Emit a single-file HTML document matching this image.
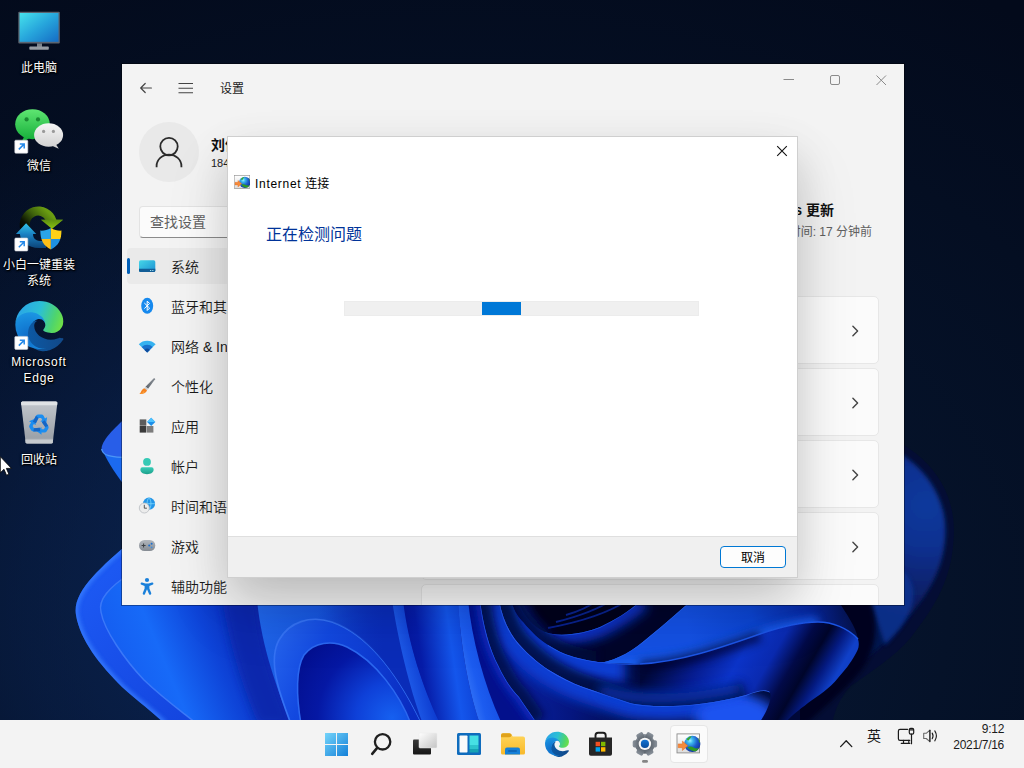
<!DOCTYPE html>
<html lang="zh-CN">
<head>
<meta charset="utf-8">
<title>设置</title>
<style>
html,body{margin:0;padding:0;}
body{width:1024px;height:768px;overflow:hidden;position:relative;background:#040d20;
 font-family:"Liberation Sans","Noto Sans CJK SC",sans-serif;font-size:12px;color:#1b1b1b;}
.abs{position:absolute;}
#wall{position:absolute;left:0;top:0;width:1024px;height:768px;}
/* desktop icons */
.dlabel{position:absolute;left:0;width:78px;text-align:center;color:#fff;font-size:12px;line-height:17px;
 text-shadow:0 1px 2px #000,0 0 3px #000,1px 1px 1px rgba(0,0,0,.9);}
/* settings window */
#win{position:absolute;left:122px;top:64px;width:782px;height:541px;background:#f3f3f3;overflow:hidden;
 box-shadow:0 0 0 1px rgba(0,0,0,.35);}
#win .t{position:absolute;white-space:nowrap;}
.nav{position:absolute;left:49px;font-weight:350;font-size:14px;line-height:20px;color:#1b1b1b;white-space:nowrap;}
.card{position:absolute;left:299px;width:458.300px;height:68.200px;background:#fbfbfb;border:1px solid #e7e7e7;border-radius:5px;box-sizing:border-box;}
/* dialog */
#dlg{position:absolute;left:228px;top:137px;width:569px;height:440px;background:#fff;
 box-shadow:0 0 0 1px #cfcfcf, 0 18px 40px rgba(0,0,0,.13), 0 32px 60px rgba(0,0,0,.13);}
#dlg .foot{position:absolute;left:0;top:399px;width:569px;height:41px;background:#f0f0f0;border-top:1px solid #dfdfdf;box-sizing:border-box;}
#dlg .btn{position:absolute;left:492px;top:409px;width:66px;height:22px;box-sizing:border-box;border:1px solid #0078d4;border-radius:4px;background:#fdfdfd;
 text-align:center;font-size:12px;line-height:22px;color:#000;}
/* taskbar */
#tb{position:absolute;left:0;top:720px;width:1024px;height:48px;background:#f3f3f3;}
#tb .t{position:absolute;white-space:nowrap;color:#1b1b1b;}
</style>
</head>
<body>
<svg id="wall" viewBox="0 0 1024 768" width="1024" height="768">
<defs>
 <radialGradient id="bg1" cx="0.45" cy="0.8" r="0.95">
  <stop offset="0" stop-color="#081b3e"/><stop offset="0.5" stop-color="#051229"/><stop offset="1" stop-color="#030a1b"/>
 </radialGradient>
 <filter id="b1" filterUnits="userSpaceOnUse" x="0" y="380" width="1024" height="388"><feGaussianBlur stdDeviation="0.7"/></filter>
 <filter id="b2" filterUnits="userSpaceOnUse" x="0" y="380" width="1024" height="388"><feGaussianBlur stdDeviation="2"/></filter>
 <filter id="b4" filterUnits="userSpaceOnUse" x="0" y="380" width="1024" height="388"><feGaussianBlur stdDeviation="4"/></filter>
 <filter id="b6" filterUnits="userSpaceOnUse" x="0" y="380" width="1024" height="388"><feGaussianBlur stdDeviation="6"/></filter>
 <filter id="b10" filterUnits="userSpaceOnUse" x="0" y="380" width="1024" height="388"><feGaussianBlur stdDeviation="10"/></filter>
 <linearGradient id="gL2" x1="76" y1="600" x2="180" y2="720" gradientUnits="userSpaceOnUse">
  <stop offset="0" stop-color="#1c58f2"/><stop offset="1" stop-color="#1446e0"/>
 </linearGradient>
 <linearGradient id="gL3" x1="100" y1="700" x2="290" y2="620" gradientUnits="userSpaceOnUse">
  <stop offset="0" stop-color="#2a6cf6"/><stop offset="0.08" stop-color="#145aee"/><stop offset="0.36" stop-color="#176af8"/>
  <stop offset="0.6" stop-color="#0e44d8"/><stop offset="0.82" stop-color="#092ab6"/><stop offset="1" stop-color="#0826ac"/>
 </linearGradient>
 <linearGradient id="gL5" x1="257" y1="610" x2="390" y2="640" gradientUnits="userSpaceOnUse">
  <stop offset="0" stop-color="#2066ea"/><stop offset="0.5" stop-color="#1654de"/><stop offset="1" stop-color="#0a2cb8"/>
 </linearGradient>
 <linearGradient id="gA1" x1="275" y1="640" x2="420" y2="700" gradientUnits="userSpaceOnUse">
  <stop offset="0" stop-color="#2462ec"/><stop offset="0.3" stop-color="#1248e0"/><stop offset="1" stop-color="#0a2cc0"/>
 </linearGradient>
 <radialGradient id="gA2" cx="392" cy="718" r="120" gradientUnits="userSpaceOnUse">
  <stop offset="0" stop-color="#1660f0"/><stop offset="0.3" stop-color="#0e40d8"/><stop offset="0.62" stop-color="#0518a4"/><stop offset="1" stop-color="#020c88"/>
 </radialGradient>
 <radialGradient id="gR" cx="926" cy="505" r="120" gradientUnits="userSpaceOnUse">
  <stop offset="0" stop-color="#103a9c"/><stop offset="0.35" stop-color="#0d3090"/><stop offset="0.7" stop-color="#09226c"/><stop offset="1" stop-color="#061650"/>
 </radialGradient>
 <linearGradient id="gT1" x1="400" y1="660" x2="470" y2="650" gradientUnits="userSpaceOnUse">
  <stop offset="0" stop-color="#041298"/><stop offset="0.3" stop-color="#061ca8"/><stop offset="0.75" stop-color="#1456ec"/><stop offset="1" stop-color="#0e44d8"/>
 </linearGradient>
 <linearGradient id="gUp" x1="690" y1="640" x2="850" y2="610" gradientUnits="userSpaceOnUse">
  <stop offset="0" stop-color="#1450e2"/><stop offset="0.4" stop-color="#0c44d0"/><stop offset="0.75" stop-color="#08269a"/><stop offset="1" stop-color="#04124e"/>
 </linearGradient>
 <linearGradient id="gCone" x1="674" y1="625" x2="829.7" y2="715.2" gradientUnits="userSpaceOnUse">
  <stop offset="0" stop-color="#000838"/><stop offset="0.23" stop-color="#061c90"/><stop offset="0.41" stop-color="#0c34c8"/><stop offset="0.56" stop-color="#0a2ab0"/><stop offset="0.68" stop-color="#020a48"/><stop offset="0.76" stop-color="#00052a"/><stop offset="0.84" stop-color="#041a80"/><stop offset="0.92" stop-color="#1040c8"/><stop offset="1" stop-color="#1040c8"/>
 </linearGradient>
 <linearGradient id="gS1" x1="392" y1="640" x2="416" y2="634" gradientUnits="userSpaceOnUse">
  <stop offset="0" stop-color="#2262ee"/><stop offset="1" stop-color="#0d3cd0"/>
 </linearGradient>
 <linearGradient id="gS2" x1="458" y1="640" x2="480" y2="634" gradientUnits="userSpaceOnUse">
  <stop offset="0" stop-color="#2a6af4"/><stop offset="0.3" stop-color="#1c5cf0"/><stop offset="1" stop-color="#1650e4"/>
 </linearGradient>
 <linearGradient id="gDk" x1="490" y1="0" x2="650" y2="0" gradientUnits="userSpaceOnUse">
  <stop offset="0" stop-color="#0a26b0"/><stop offset="0.5" stop-color="#051680"/><stop offset="1" stop-color="#000838"/>
 </linearGradient>
 <linearGradient id="gS0" x1="318" y1="0" x2="385" y2="0" gradientUnits="userSpaceOnUse">
  <stop offset="0" stop-color="#0a2ebc" stop-opacity="0"/><stop offset="1" stop-color="#0a2cb8" stop-opacity="1"/>
 </linearGradient>
 <radialGradient id="bg2" cx="280" cy="600" r="520" gradientUnits="userSpaceOnUse">
  <stop offset="0" stop-color="#0c2a5c" stop-opacity="0.8"/><stop offset="0.5" stop-color="#0a2250" stop-opacity="0.5"/><stop offset="1" stop-color="#081a40" stop-opacity="0"/>
 </radialGradient>
 <clipPath id="cL2"><path d="M132 540 C100 568 72 592 76 615 C80 640 100 665 122 687 C140 703 155 714 165 724 L420 724 L420 540Z"/></clipPath>
 <clipPath id="cRp"><path d="M860 428 C925 443 958 488 953.500 540 C951 585 930 612 912 636 C894 658 870 672 851 686 C840 697 835 710 832 724 L700 724 L700 428Z"/></clipPath>
 <clipPath id="cw"><rect x="0" y="0" width="1024" height="722"/></clipPath>
 <clipPath id="cB1"><path d="M518 600 C522 614 532 626 545 632 C560 638 585 633 600 627 C615 620 628 612 642 600 L700 600 L700 722 L460 722 L460 600Z"/></clipPath>
 <clipPath id="cB2"><path d="M511 600 C514 612 519 618 523 622 C531 632 540 640 548 645 C556 650 564 654 571 656 C586 661 605 664 640 664 C680 662 720 648 760 634 L800 640 L800 722 L460 722 L460 600Z"/></clipPath>
 <clipPath id="cB3"><path d="M499 600 C503 622 512 638 523 648.5 C532 658 540 664 548 669.5 C560 677 572 683 583 687 C600 693 615 698 630 703 C650 708 700 708 746 695 C758 690 766 689 770 692 C772 698 769 708 760 722 L460 722 L460 600Z"/></clipPath>
 <clipPath id="cB4"><path d="M480 600 C483 625 490 650 498 665 C505 680 512 690 519 697 C525 706 530 713 536 722 L460 722 L460 600Z"/></clipPath>
 <clipPath id="cUp"><path d="M600 663 C618 660 634 650 650 636 C665 624 678 612 692 600 L838 600 C846 614 856 626 858 639 C848 628 832 622 818 622 C800 622 780 627 760 634 C720 648 680 662 640 664Z"/></clipPath>
</defs>
<rect width="1024" height="768" fill="url(#bg1)"/>
<rect width="1024" height="768" fill="url(#bg2)"/>
<g clip-path="url(#cw)">
 <!-- right petal with dark outline -->
 <path d="M860 428 C925 443 958 488 953.500 540 C951 585 930 612 912 636 C894 658 870 672 851 686 C840 697 835 710 832 724 L700 724 L700 428Z" fill="#040d34"/>
 <g clip-path="url(#cRp)">
  <path d="M860 436 C918 451 950 494 945 540 C942 575 924 598 908 618 C892 640 872 653 855 666 L800 724 L700 724 L700 436Z" fill="url(#gR)" filter="url(#b2)"/>
  <path d="M880 560 C905 566 916 582 913 600 C911 615 900 630 885 645 L870 600Z" fill="#103494" filter="url(#b2)" opacity="0.8"/>
 </g>
 <path d="M836 600 L870 600 C879 625 877 650 860 672 C845 690 825 706 806 724 L770 724 L770 600Z" fill="#00031a" filter="url(#b2)" opacity="0.92"/>
 <!-- generic bloom body under the window -->
 <path d="M165 722 L130 560 L130 420 L820 420 L820 640 L785 722Z" fill="#0a28b4"/>
 <!-- upper-left small petal -->
 <path d="M130 456 L103 451 C108 463 118 478 130 492Z" fill="#1b6af0"/>
 <path d="M130 414 C114 428 100 442 101.700 450 C103 455.500 110 457.600 130 457.600Z" fill="#285ee8"/>
 <path d="M101.700 449 C102.500 455.500 110 457.600 130 457.600" fill="none" stroke="#4c96f6" stroke-width="1.300" filter="url(#b1)"/>
 <!-- lower-left outer petal -->
 <path d="M132 540 C100 568 72 592 76 615 C80 640 100 665 122 687 C140 703 155 714 165 724 L420 724 L420 540Z" fill="url(#gL2)"/>
 <path d="M132 540 C100 568 72 592 76 615 C80 640 100 665 122 687 C140 703 155 714 165 724" fill="none" stroke="#3a80ff" stroke-width="5" filter="url(#b2)" opacity="0.9" clip-path="url(#cL2)"/>
 <!-- inner petal -->
 <path d="M132 572 C108 588 98 600 101 612 C104 630 125 660 144 680 C165 700 185 714 197 724 L420 724 L420 572Z" fill="url(#gL3)"/>
 <path d="M222 600 L258 600 C262 650 278 690 292 724 L258 724 C244 690 230 650 222 600Z" fill="#0826aa" filter="url(#b4)" opacity="0.85"/>
 <!-- lighter petal right of fold -->
 <path d="M257 600 C262 650 278 690 291 724 L460 724 L460 600Z" fill="url(#gL5)"/>
 <!-- arch 1 -->
 <path d="M291 724 C278 690 268 660 279 640 C289 622 310 615 332 622 C372 636 402 682 422 724Z" fill="url(#gA1)"/>
 <!-- arch 2 -->
 <path d="M301 724 C296 695 296 668 304 655 C314 642 332 640 347 647 C376 661 400 695 411 724Z" fill="url(#gA2)"/>
 <path d="M291 724 C278 690 268 660 279 640 C289 622 310 615 332 622 C372 636 402 682 422 724" fill="none" stroke="#3472f4" stroke-width="1.600" filter="url(#b1)"/>
 <path d="M301 724 C296 695 296 668 304 655 C314 642 332 640 347 647 C376 661 400 695 411 724" fill="none" stroke="#2c68f0" stroke-width="1.500" filter="url(#b1)"/>
 <path d="M132 572 C108 588 98 600 101 612 C104 630 125 660 144 680 C165 700 185 714 197 724" fill="none" stroke="#3a78f8" stroke-width="1.500" filter="url(#b1)"/>
 <!-- swoosh zone base -->
 <path d="M467 600 L700 600 L700 724 L501 724 C484 685 472 640 467 600Z" fill="#020c5a"/>
 <!-- top dark w/ streaks -->
 <path d="M500 600 L700 600 L700 660 L500 660Z" fill="#00031c"/>
 <g stroke="#0a2aa8" stroke-width="2" fill="none" filter="url(#b1)" opacity="0.8">
  <path d="M548 628 C580 622 610 612 628 600"/><path d="M556 622 C580 616 600 608 612 600"/><path d="M566 615 C580 611 590 606 598 600"/>
 </g>
 <!-- band1 -->
 <g clip-path="url(#cB1)">
  <rect x="460" y="600" width="250" height="124" fill="#00052a"/>
  <path d="M518 600 C522 614 532 626 545 632 C560 638 585 633 600 627 C615 620 628 612 642 600" fill="none" stroke="#0c32c4" stroke-width="20" filter="url(#b6)"/>
  <path d="M545 632 C560 638 585 633 600 627 C615 620 628 612 642 600" fill="none" stroke="#1c54e4" stroke-width="1.400" filter="url(#b1)"/>
 </g>
 <path d="M470 600 L524 600 C530 618 538 628 548 634 L530 660 L470 640Z" fill="#0a2cb4" filter="url(#b6)" opacity="0.9"/>
 <!-- upper bright petal (between E1b and E2) -->
 <g clip-path="url(#cUp)">
  <rect x="590" y="600" width="280" height="70" fill="url(#gUp)"/>
  <path d="M600 666 C640 667 680 664 720 650 C750 640 790 625 818 624" fill="none" stroke="#1a62f0" stroke-width="14" filter="url(#b4)" opacity="0.8"/>
  <path d="M600 663 C618 660 634 650 650 636 C665 624 678 612 692 600" fill="none" stroke="#2460ee" stroke-width="1.6" filter="url(#b1)"/>
 </g>
 <path d="M511 600 C514 612 519 618 523 622 C531 632 540 640 548 645 C556 650 564 654 571 656 C580 659 588 661 596 662" fill="none" stroke="#01083c" stroke-width="22" filter="url(#b4)" opacity="0.8"/>
 <!-- band2 -->
 <g clip-path="url(#cB2)">
  <path d="M460 600 L600 600 L600 663 C640 664 680 662 720 648 C740 641 750 637 760 634 L800 640 L800 724 L460 724Z" fill="url(#gDk)"/>
  <path d="M511 600 C514 612 519 618 523 622 C531 632 540 640 548 645 C556 650 564 654 571 656 C586 661 605 664 625 664" fill="none" stroke="#0e3cd2" stroke-width="38" filter="url(#b6)"/>
  <path d="M548 645 C556 650 564 654 571 656 C586 661 605 664 640 664 C680 662 720 648 760 634" fill="none" stroke="#2058ea" stroke-width="1.500" filter="url(#b1)"/>
 </g>
 <!-- cone interior right -->
 <path d="M640 664 C680 662 720 648 760 634 C780 627 800 622 818 622 C832 622 848 628 858 639 C860 646 858 650 855 655 C850 664 845 670 838 678 C830 688 818 696 808 703 C798 711 790 716 785 724 L640 724Z" fill="url(#gCone)"/>
 <path d="M640 666 C680 664 720 650 760 636" fill="none" stroke="#00052a" stroke-width="10" filter="url(#b4)" opacity="0.7"/>
 <path d="M640 664 C680 662 720 648 760 634 C780 627 800 622 818 622 C832 622 848 628 858 639" fill="none" stroke="#1c54e4" stroke-width="1.4" filter="url(#b1)"/>
 <path d="M499 600 C503 622 512 638 523 648.5 C532 658 540 664 548 669.5 C560 677 572 683 583 687 C600 693 615 698 630 703 C650 708 700 708 746 695" fill="none" stroke="#01083c" stroke-width="26" filter="url(#b4)" opacity="0.85"/>
 <!-- band3 -->
 <g clip-path="url(#cB3)">
  <rect x="460" y="600" width="330" height="130" fill="url(#gDk)"/>
  <path d="M499 600 C503 622 512 638 523 648.5 C532 658 540 664 548 669.5 C560 677 572 683 583 687 C600 693 615 698 630 703 C650 708 700 708 746 695" fill="none" stroke="#0e3cd2" stroke-width="30" filter="url(#b6)"/>
  <ellipse cx="735" cy="716" rx="40" ry="22" fill="#1a52f0" filter="url(#b6)"/>
  <path d="M499 600 C503 622 512 638 523 648.5 C532 658 540 664 548 669.5 C560 677 572 683 583 687 C600 693 615 698 630 703 C650 708 700 708 746 695 C758 690 766 689 770 692" fill="none" stroke="#2a5eee" stroke-width="1.500" filter="url(#b1)"/>
 </g>
 <!-- glow above E3 -->
 <path d="M600 690 C630 700 680 702 740 688" fill="none" stroke="#0e3cd0" stroke-width="10" filter="url(#b6)" opacity="0.85"/>
 <path d="M480 600 C483 625 490 650 498 665 C505 680 512 690 519 697 C525 706 530 713 536 722" fill="none" stroke="#01083c" stroke-width="22" filter="url(#b4)" opacity="0.8"/>
 <!-- band4 -->
 <g clip-path="url(#cB4)">
  <rect x="460" y="600" width="90" height="130" fill="#03108c"/>
  <path d="M480 600 C483 625 490 650 498 665 C505 680 512 690 519 697 C525 706 530 713 536 722" fill="none" stroke="#0a2cc0" stroke-width="10" filter="url(#b4)"/>
  <path d="M480 600 C483 625 490 650 498 665 C505 680 512 690 519 697 C525 706 530 713 536 722" fill="none" stroke="#2054e6" stroke-width="1.300" filter="url(#b1)"/>
 </g>
 <!-- stripes and tube -->
 <path d="M300 600 L392 600 C398 640 410 690 424 724 L422 724 C402 682 372 636 332 622 C320 618 310 618 300 620Z" fill="url(#gS0)"/>
 <path d="M392 600 L404 600 C408 645 424 690 441 724 L423 724 C410 690 398 640 392 600Z" fill="url(#gS1)"/>
 <path d="M403 600 L458 600 C460 640 468 690 480 724 L440 724 C424 690 408 645 403 600Z" fill="url(#gT1)"/>
 <path d="M458 600 L468 600 C472 640 484 685 502 724 L480 724 C468 690 460 640 458 600Z" fill="url(#gS2)"/>
</g>
</svg>

<svg class="abs" style="left:0;top:0" width="80" height="480" viewBox="0 0 80 480">
 <defs>
  <linearGradient id="scr" x1="0" y1="0" x2="1" y2="1"><stop offset="0" stop-color="#46e2ec"/><stop offset="0.5" stop-color="#27a6dc"/><stop offset="1" stop-color="#156cc4"/></linearGradient>
  <linearGradient id="wcg" x1="0" y1="0" x2="0" y2="1"><stop offset="0" stop-color="#5fe672"/><stop offset="1" stop-color="#18b03c"/></linearGradient>
  <linearGradient id="wcw" x1="0" y1="0" x2="0" y2="1"><stop offset="0" stop-color="#f6f6f6"/><stop offset="1" stop-color="#d2d2d2"/></linearGradient>
  <linearGradient id="bin" x1="0" y1="0" x2="0" y2="1"><stop offset="0" stop-color="#c9cdd2"/><stop offset="0.85" stop-color="#a3a8ae"/><stop offset="1" stop-color="#b9bdc2"/></linearGradient>
  <linearGradient id="xbg" x1="20" y1="232" x2="44" y2="208" gradientUnits="userSpaceOnUse"><stop offset="0" stop-color="#000"/><stop offset="0.3" stop-color="#0c1402"/><stop offset="0.65" stop-color="#3e620c"/><stop offset="1" stop-color="#6a9c12"/></linearGradient>
  <linearGradient id="xbh" x1="0" y1="0" x2="0" y2="1"><stop offset="0" stop-color="#5c8e10"/><stop offset="1" stop-color="#8cc412"/></linearGradient>
  <linearGradient id="xbb" x1="0" y1="0" x2="0" y2="1"><stop offset="0" stop-color="#32c6e6"/><stop offset="0.45" stop-color="#1a80c2"/><stop offset="1" stop-color="#0c4478"/></linearGradient>
  <g id="sc"><rect x="0" y="0" width="13" height="13" rx="1" fill="#fff" stroke="#d0d4da" stroke-width="0.6"/><path d="M4 9.2L9 4.2M5 3.8h4.4v4.4" fill="none" stroke="#2488e8" stroke-width="1.500"/></g>
  <linearGradient id="eg1" x1="63" y1="177" x2="241" y2="177" gradientUnits="userSpaceOnUse"><stop offset="0" stop-color="#0c59a4"/><stop offset="1" stop-color="#114a8b"/></linearGradient>
  <radialGradient id="eg2" cx="70" cy="190" r="150" gradientUnits="userSpaceOnUse"><stop offset="0" stop-color="#0f6cc8"/><stop offset="0.5" stop-color="#1583d8"/><stop offset="1" stop-color="#1e9de6"/></radialGradient>
  <linearGradient id="eg3" x1="20" y1="40" x2="250" y2="120" gradientUnits="userSpaceOnUse"><stop offset="0" stop-color="#2aa6e6"/><stop offset="0.45" stop-color="#2cc0d4"/><stop offset="0.8" stop-color="#4ed46e"/><stop offset="1" stop-color="#6ee048"/></linearGradient>
  <g id="edge">
   <path d="M235.700 195.500a93.700 93.700 0 0 1-10.600 4.700 101.900 101.900 0 0 1-35.900 6.400c-47.300 0-88.500-32.500-88.500-74.300a31.500 31.500 0 0 1 16.400-27.300c-42.800-1.800-53.800 46.400-53.800 74.600 0 79.900 73.600 87.900 89.500 87.900 8.600 0 21.500-2.500 29.300-5l1.400-0.400a139.400 139.400 0 0 0 72.300-57.300 4.300 4.300 0 0 0-5.800-6.100z" fill="url(#eg1)"/>
   <path d="M105.700 241.400a79.200 79.200 0 0 1-22.700-21.300 80.700 80.700 0 0 1 29.500-120c3.200-1.500 8.500-4.100 15.600-4a32.400 32.400 0 0 1 25.700 13 31.900 31.900 0 0 1 6.300 18.700c0-0.200 24.500-79.600-80-79.600-43.900 0-80 41.600-80 78.200a130.200 130.200 0 0 0 12.100 56 128 128 0 0 0 156.400 67 75.500 75.500 0 0 1-62.800-8z" fill="url(#eg2)"/>
   <path d="M152.300 148.900c-0.900 1-3.400 2.500-3.400 5.600 0 2.600 1.700 5.200 4.800 7.300 14.300 10 41.400 8.600 41.500 8.600a59.600 59.600 0 0 0 30.300-8.300 61.400 61.400 0 0 0 30.400-52.900c0.300-22.400-8-37.300-11.300-43.900C223.500 24.100 178.200 0 128 0A128 128 0 0 0 0 126.200c0.500-36.500 36.800-66 80-66 3.500 0 23.500 0.300 42 10a72.600 72.600 0 0 1 30.900 29.300c6.100 10.600 7.200 24.100 7.200 29.500s-2.700 13.300-7.900 20z" fill="url(#eg3)"/>
  </g>
 </defs>
 <!-- This PC -->
 <rect x="18.3" y="11.7" width="41.5" height="31.7" rx="1" fill="#5b6470"/>
 <rect x="19.6" y="13" width="38.9" height="28.8" fill="url(#scr)"/>
 <rect x="37" y="43.4" width="5" height="4" fill="#7b828a"/>
 <rect x="29.3" y="46.6" width="19.5" height="3.2" rx="0.8" fill="#969ca3"/>
 <!-- WeChat -->
 <path d="M24.2 136.2l-2.8 6.3 7.6-4z" fill="#18b03c"/>
 <ellipse cx="32.5" cy="124.2" rx="17.3" ry="15" fill="url(#wcg)"/>
 <circle cx="26.6" cy="119.4" r="2.1" fill="#1a8a32"/><circle cx="38" cy="119.4" r="2.1" fill="#1a8a32"/>
 <path d="M55.4 143.6l3.4 5.2-7.4-3.4z" fill="#d2d2d2"/>
 <ellipse cx="48.6" cy="135" rx="14.5" ry="11.8" fill="url(#wcw)"/>
 <circle cx="43.6" cy="131.4" r="1.6" fill="#9a9a9a"/><circle cx="53.4" cy="131.4" r="1.6" fill="#9a9a9a"/>
 <use href="#sc" x="14.8" y="140.2"/>
 <!-- XiaoBai reinstall -->
 <path d="M20.500 230.900A18.800 18.800 0 0 1 56.400 219.700L63 219.700L52 228.800L41 219.700L45.400 219.700A8.400 8.400 0 0 0 30.300 226.900Z" fill="url(#xbg)"/>
 <path d="M41 219.700H63L52 228.800Z" fill="url(#xbh)"/>
 <path d="M26.100 223.300L36.300 233.900H33C33 237.500 35 240.500 40 241H46V248H39C28 247.500 20.500 242 19.900 233.900H15.900Z" fill="url(#xbb)"/>
 <clipPath id="shc"><path d="M50.900 228C47.500 230 44 230.800 40.300 230.600C40.300 240 43.500 246 50.900 249.600C58.300 246 61.500 240 61.500 230.600C57.800 230.800 54.300 230 50.900 228Z"/></clipPath>
 <g clip-path="url(#shc)">
  <rect x="40" y="227" width="10.900" height="12" fill="#2aa4e8"/><rect x="50.900" y="227" width="11" height="12" fill="#fdd116"/>
  <rect x="40" y="239" width="10.900" height="11" fill="#fcbe18"/><rect x="50.900" y="239" width="11" height="11" fill="#1e90e0"/>
 </g>
 <use href="#sc" x="14.800" y="238"/>
 <!-- Edge -->
 <use href="#edge" transform="translate(15.300 301) scale(0.1875)"/>
 <use href="#sc" x="14.800" y="336.400"/>
 <!-- Recycle bin -->
 <path d="M21 402.600l1.200-1h34l1.200 1-4.600 39.600q-0.200 1.400-1.600 1.400H27.200q-1.400 0-1.600-1.400z" fill="url(#bin)" opacity="0.96"/>
 <path d="M21 402.600l1.200-1h34l1.200 1-0.300 2.600H21.300z" fill="#dfe2e5"/>
 <path d="M25.300 439.600h27.800l-0.300 2.600q-0.200 1.400-1.600 1.400H27.200q-1.400 0-1.600-1.400z" fill="#c6cace"/>
 <g transform="translate(39.200 424.400)">
  <g fill="#1b8df0"><path d="M-6.400 -2.600L-3.200 -8.600Q-2.400 -10 -0.800 -10L2.200 -10Q3.600 -10 4.400 -8.600L5.800 -6L7.900 -7.200L7 -0.900L1.100 -3.200L3.100 -4.400L1.900 -6.500L-0.700 -6.500L-3.300 -1.200Z"/></g>
  <g fill="#1b8df0" transform="rotate(120)"><path d="M-6.400 -2.600L-3.200 -8.600Q-2.400 -10 -0.800 -10L2.200 -10Q3.600 -10 4.400 -8.600L5.800 -6L7.900 -7.200L7 -0.900L1.100 -3.200L3.100 -4.400L1.900 -6.500L-0.700 -6.500L-3.300 -1.200Z"/></g>
  <g fill="#1b8df0" transform="rotate(240)"><path d="M-6.400 -2.600L-3.200 -8.600Q-2.400 -10 -0.800 -10L2.200 -10Q3.600 -10 4.400 -8.600L5.800 -6L7.900 -7.200L7 -0.900L1.100 -3.200L3.100 -4.400L1.900 -6.500L-0.700 -6.500L-3.300 -1.200Z"/></g>
  <g fill="#1565c4"><path d="M-6.400 -2.600L-3.200 -8.600L-0.700 -6.500L-3.300 -1.200Z"/><path d="M-6.400 -2.600L-3.200 -8.600L-0.700 -6.500L-3.300 -1.200Z" transform="rotate(120)"/><path d="M-6.400 -2.600L-3.200 -8.600L-0.700 -6.500L-3.300 -1.200Z" transform="rotate(240)"/></g>
 </g>
 <!-- cursor -->
 <path d="M0.300 456.600v16.200l3.700-3.500 2.500 5.900 2.400-1-2.500-5.800h5.100z" fill="#fff" stroke="#000" stroke-width="0.8" stroke-linejoin="round"/>
</svg>
<div class="dlabel" style="top:59.500px">此电脑</div>
<div class="dlabel" style="top:157.500px">微信</div>
<div class="dlabel" style="top:257px;line-height:16px">小白一键重装<br>系统</div>
<div class="dlabel" style="top:353.500px;line-height:16px;letter-spacing:0.750px">Microsoft<br>Edge</div>
<div class="dlabel" style="top:451.500px">回收站</div>

<div id="win">
 <!-- title row -->
 <svg class="abs" style="left:17px;top:18px" width="14" height="12" viewBox="0 0 14 12"><path d="M12.4 6H1.8M6.2 1.5L1.7 6l4.5 4.5" fill="none" stroke="#444" stroke-width="1.2" stroke-linecap="round" stroke-linejoin="round"/></svg>
 <svg class="abs" style="left:56px;top:18px" width="16" height="12" viewBox="0 0 16 12"><path d="M0.5 1.5h14.5M0.5 6.2h14.5M0.5 10.7h14.5" stroke="#444" stroke-width="1.1" fill="none"/></svg>
 <div class="t" style="left:98px;top:17px;font-size:12px;line-height:17px;color:#1b1b1b">设置</div>
 <svg class="abs" style="left:660px;top:9px" width="106" height="14" viewBox="0 0 106 14">
  <path d="M1.5 6.5h10.5" stroke="#8a8a8a" stroke-width="1" fill="none"/>
  <rect x="48.5" y="2.5" width="9" height="9" rx="1.5" fill="none" stroke="#8a8a8a" stroke-width="1"/>
  <path d="M94.5 2.5l9.5 9.5M104 2.5l-9.5 9.5" stroke="#8a8a8a" stroke-width="1" fill="none"/>
 </svg>
 <!-- avatar -->
 <div class="abs" style="left:17px;top:58px;width:60px;height:60px;border-radius:50%;background:#e9e9e9"></div>
 <svg class="abs" style="left:27px;top:68px" width="40" height="40" viewBox="0 0 40 40">
  <circle cx="20" cy="14.6" r="8.7" fill="none" stroke="#2b2b2b" stroke-width="1.8"/>
  <path d="M7.6 35.2v-1.2c0-6.6 5.6-11.4 12.4-11.4s12.4 4.8 12.4 11.4v1.2" fill="none" stroke="#2b2b2b" stroke-width="1.8"/>
 </svg>
 <div class="t" style="left:89px;top:71px;font-size:14px;line-height:20px;font-weight:bold;color:#111">刘伟</div>
 <div class="t" style="left:89px;top:92px;font-size:11px;line-height:15px;color:#222">184****@outlook.com</div>
 <!-- search -->
 <div class="abs" style="left:17px;top:142px;width:286px;height:32px;box-sizing:border-box;background:#fbfbfb;border:1px solid #e3e3e3;border-bottom:1px solid #8b8b8b;border-radius:4px"></div>
 <div class="t" style="left:28px;top:148px;font-size:14px;line-height:20px;color:#606060">查找设置</div>
 <!-- nav -->
 <div class="abs" style="left:5px;top:184px;width:298px;height:36px;border-radius:4px;background:#eaeaea"></div>
 <div class="abs" style="left:5px;top:194px;width:3px;height:16px;border-radius:2px;background:#005fb8"></div>
 <svg class="abs" style="left:15px;top:190px" width="20" height="350" viewBox="0 0 20 350">
  <defs>
   <linearGradient id="n1" x1="0" y1="0" x2="1" y2="1"><stop offset="0" stop-color="#45d6e8"/><stop offset="1" stop-color="#1b8fd2"/></linearGradient>
   <linearGradient id="n6" x1="0" y1="0" x2="0" y2="1"><stop offset="0" stop-color="#38cdb8"/><stop offset="1" stop-color="#1c9f8a"/></linearGradient>
   <linearGradient id="n8" x1="0" y1="0" x2="0" y2="1"><stop offset="0" stop-color="#b2b7bd"/><stop offset="1" stop-color="#858b93"/></linearGradient>
   <linearGradient id="n4" x1="1" y1="0" x2="0" y2="1"><stop offset="0" stop-color="#8a9097"/><stop offset="1" stop-color="#5d636a"/></linearGradient>
  </defs>
  <!-- system -->
  <rect x="2" y="6.300" width="16.300" height="11.800" rx="1.600" fill="url(#n1)"/>
  <path d="M2 14.800h16.300v1.700q0 1.600-1.600 1.600H3.600q-1.600 0-1.600-1.600z" fill="#125d96"/>
  <rect x="13" y="16" width="1.200" height="1" fill="#9fe0f2"/><rect x="15.200" y="16" width="1.200" height="1" fill="#9fe0f2"/>
  <!-- bluetooth -->
  <ellipse cx="10.200" cy="51.800" rx="6" ry="8" fill="#1689ee"/>
  <path d="M7.600 49.300l5 4.800-2.400 2.400v-9.400l2.400 2.400-5 4.800" fill="none" stroke="#fff" stroke-width="1" stroke-linejoin="round" stroke-linecap="round"/>
  <!-- wifi -->
  <path d="M10.200 98.600L1.800 90.200a11.900 11.900 0 0 1 16.800 0z" fill="#36b2f0"/>
  <path d="M10.200 98.600L4.700 93.100a7.800 7.800 0 0 1 11 0z" fill="#1a72cc"/>
  <path d="M10.200 98.600L7.500 95.900a3.800 3.800 0 0 1 5.400 0z" fill="#0f4c9c"/>
  <!-- brush -->
  <path d="M16.800 124.300q1.400-0.600 1.300 0.900l-7 9.600-2.600-2z" fill="url(#n4)"/>
  <path d="M8.500 132.800l2.600 2-1.100 1.500-2.700-2.100z" fill="#c9ced3"/>
  <path d="M7.300 134.200l2.700 2.100c-0.600 2.400-3.400 3.900-7.600 3.600 1.800-1.100 1.800-4.700 4.900-5.700z" fill="#f58220"/>
  <path d="M2.400 139.900c2.200-0.300 3.400-1.300 4.200-2.900l1.400 1.100c-1 1.300-2.900 2-5.600 1.800z" fill="#f9a03c"/>
  <!-- apps -->
  <rect x="2.700" y="165.400" width="6.600" height="6.300" fill="#5c5c5c"/>
  <rect x="2.700" y="172" width="6.600" height="6.600" fill="#3a3a3a"/>
  <rect x="9.800" y="172" width="6.600" height="6.600" fill="#7c7c7c"/>
  <path d="M14.200 163.800l4.100 4.100-4.100 4.100-4.100-4.100z" fill="#1d8fe8"/>
  <path d="M14.200 163.800l4.100 4.100h-8.200z" fill="#4cc2ff"/>
  <!-- account -->
  <circle cx="10" cy="207.900" r="3.900" fill="#35c9b5"/>
  <path d="M3.400 215.200q0-2 2-2h9.200q2 0 2 2v0.600c0 2.600-2.800 4.400-6.600 4.400s-6.600-1.800-6.600-4.400z" fill="url(#n6)"/>
  <!-- time & language -->
  <circle cx="12" cy="249.700" r="6.100" fill="#2496e8"/>
  <path d="M12 243.600c-2.600 2.600-2.600 9.600 0 12.200c2.600-2.600 2.600-9.600 0-12.200zM6 249.700h12" fill="none" stroke="#7fd6fa" stroke-width="0.800"/>
  <circle cx="7.300" cy="254" r="5" fill="#ececec" stroke="#b9bdc2" stroke-width="0.800"/>
  <path d="M7.300 251.200v3h2.200" fill="none" stroke="#444" stroke-width="0.900" stroke-linecap="round" stroke-linejoin="round"/>
  <!-- gaming -->
  <rect x="2" y="286" width="16.300" height="11" rx="5.500" fill="url(#n8)"/>
  <path d="M6.600 289.500v4M4.600 291.500h4" stroke="#3c3f44" stroke-width="1"/>
  <circle cx="12.200" cy="291.500" r="1" fill="#1b6fd0"/><circle cx="14.600" cy="289.700" r="1" fill="#1b6fd0"/><circle cx="14.600" cy="293.300" r="0.900" fill="#3c8ee0"/>
  <!-- accessibility -->
  <circle cx="10" cy="326" r="2.100" fill="#1a80da"/>
  <path d="M3.600 329.400q0.300-1.200 1.500-0.800l3.300 1h3.200l3.300-1q1.200-0.400 1.500 0.800q0.200 1-0.900 1.400l-3.100 1.100v2.500l1.800 4.700q0.400 1.200-0.700 1.600q-1 0.300-1.500-0.800L10 335.300l-2 4.600q-0.500 1.100-1.500 0.800q-1.100-0.400-0.700-1.600l1.800-4.700v-2.500l-3.100-1.100q-1.100-0.400-0.900-1.400z" fill="#1a80da"/>
 </svg>
 <div class="nav" style="top:193px">系统</div>
 <div class="nav" style="top:233px">蓝牙和其他设备</div>
 <div class="nav" style="top:273px">网络 &amp; Internet</div>
 <div class="nav" style="top:313px">个性化</div>
 <div class="nav" style="top:353px">应用</div>
 <div class="nav" style="top:393px">帐户</div>
 <div class="nav" style="top:433px">时间和语言</div>
 <div class="nav" style="top:473px">游戏</div>
 <div class="nav" style="top:513px">辅助功能</div>
 <!-- right column -->
 <div class="t" style="right:70px;top:136px;font-size:14px;line-height:20px;font-weight:bold;color:#111">Windows 更新</div>
 <div class="t" style="right:32px;top:159.500px;font-size:12px;line-height:17px;color:#606060">上次检查时间: 17 分钟前</div>
 <div class="card" style="top:232.3px"></div>
 <div class="card" style="top:304.3px"></div>
 <div class="card" style="top:376.3px"></div>
 <div class="card" style="top:448.3px"></div>
 <div class="card" style="top:520.3px"></div>
 <svg class="abs" style="left:728px;top:260px" width="10" height="230" viewBox="0 0 10 230">
  <g fill="none" stroke="#444" stroke-width="1.4" stroke-linecap="round" stroke-linejoin="round">
   <path d="M2.9 2.2L7.6 7l-4.7 4.8"/><path d="M2.9 74.2L7.6 79l-4.7 4.8"/><path d="M2.9 146.2L7.6 151l-4.7 4.8"/><path d="M2.9 218.2L7.6 223l-4.7 4.8"/>
  </g>
 </svg>
</div>

<div id="dlg">
 <svg class="abs" style="left:548px;top:8px" width="12" height="12" viewBox="0 0 12 12"><path d="M1.2 1.2l9.6 9.6M10.8 1.2l-9.6 9.6" stroke="#111" stroke-width="1.1" fill="none"/></svg>
 <svg class="abs" style="left:6px;top:38px" width="16" height="14" viewBox="0 0 23 20"><use href="#neticon" transform="translate(0.250 0.500)"/></svg>
 <div class="abs" style="left:27px;top:38.500px;font-size:12px;line-height:17px;color:#000;white-space:nowrap"><span style="letter-spacing:0.700px">Internet </span>连接</div>
 <div class="abs" style="left:38px;top:85.500px;font-size:16px;line-height:23px;color:#003399;white-space:nowrap">正在检测问题</div>
 <div class="abs" style="left:116px;top:164px;width:355px;height:15px;background:#f0f0f0;box-sizing:border-box;border:1px solid #ececec"></div>
 <div class="abs" style="left:254px;top:165px;width:39px;height:13px;background:#0078d7"></div>
 <div class="foot"></div>
 <div class="btn">取消</div>
</div>

<div id="tb">
 <!-- active app tile -->
 <div class="abs" style="left:670px;top:4.600px;width:38px;height:38.700px;box-sizing:border-box;border-radius:4px;background:#fbfbfb;border:1px solid #e6e6e6"></div>
 <svg class="abs" style="left:320px;top:0" width="400" height="48" viewBox="320 0 400 48">
  <defs>
   <linearGradient id="wl" x1="0" y1="0" x2="1" y2="1"><stop offset="0" stop-color="#74d4fa"/><stop offset="1" stop-color="#1480d8"/></linearGradient>
   <linearGradient id="tv1" x1="0" y1="0" x2="1" y2="1"><stop offset="0" stop-color="#ffffff"/><stop offset="1" stop-color="#c4c4c4"/></linearGradient>
   <linearGradient id="tv2" x1="0" y1="0" x2="0" y2="1"><stop offset="0" stop-color="#3a3a3a"/><stop offset="1" stop-color="#161616"/></linearGradient>
   <linearGradient id="fo" x1="0" y1="0" x2="0" y2="1"><stop offset="0" stop-color="#ffd75e"/><stop offset="1" stop-color="#f8b92a"/></linearGradient>
   <linearGradient id="gear" x1="0" y1="0" x2="0" y2="1"><stop offset="0" stop-color="#8a929b"/><stop offset="1" stop-color="#5c646d"/></linearGradient>
<linearGradient id="gearc" x1="0" y1="0" x2="0" y2="1"><stop offset="0" stop-color="#1274d4"/><stop offset="1" stop-color="#0a4c9c"/></linearGradient>
   <linearGradient id="nfr" x1="0" y1="0" x2="0" y2="1"><stop offset="0" stop-color="#ffffff"/><stop offset="1" stop-color="#dcdcdc"/></linearGradient>
   <radialGradient id="nglobe" cx="0.36" cy="0.3" r="0.75"><stop offset="0" stop-color="#9af0ff"/><stop offset="0.25" stop-color="#3ab4ec"/><stop offset="0.6" stop-color="#1c5ccc"/><stop offset="1" stop-color="#12329a"/></radialGradient>
   <g id="neticon">
   <rect x="0" y="0" width="22.5" height="19" fill="url(#nfr)" stroke="#8c8c8c" stroke-width="0.9"/>
   <circle cx="15.3" cy="10" r="8.1" fill="url(#nglobe)"/>
   <path d="M9.600 5.200c1.600-1.800 3.400-2.600 5-2.800-0.600 1.600-2 2.400-2.600 3.800-0.800 0.600-1.800 0.200-2.400-1z" fill="#3aa62a"/>
   <path d="M10.400 13.400c2-1.200 4.400-0.800 6.600 0.400 1.600 1 3.600 0.800 4.800 0.200-0.600 1.600-1.800 2.800-3 3.400-3 0.200-6.200-1-8.400-4z" fill="#2f9a24"/>
   <path d="M20.600 3.800c1.400 1.400 2.400 3.200 2.600 5.200-1-0.600-1.400-1.800-1.600-3z" fill="#3aa62a"/>
   <path d="M1.200 10h4.200V7.200l5.400 4.700-5.400 4.700v-2.800H1.200z" fill="#f58a3c" stroke="#e26a1c" stroke-width="0.5" stroke-linejoin="round"/>
  </g>
  </defs>
  <!-- windows logo -->
  <rect x="325" y="13" width="23" height="23" fill="url(#wl)"/>
  <path d="M336.5 13v23M325 24.5h23" stroke="#f3f3f3" stroke-width="1"/>
  <!-- search -->
  <circle cx="382.6" cy="21.8" r="7.7" fill="none" stroke="#1f1f1f" stroke-width="2.3"/>
  <path d="M377 28.2l-4.8 5.6" stroke="#1f1f1f" stroke-width="2.6" stroke-linecap="round"/>
  <!-- task view -->
  <rect x="413" y="19.5" width="18" height="15" rx="1" fill="url(#tv2)"/>
  <rect x="419" y="13" width="18" height="15" rx="1" fill="url(#tv1)" stroke="#e9e9e9" stroke-width="0.5"/>
  <!-- widgets -->
  <rect x="457" y="13" width="24" height="22" rx="1.5" fill="#0f6cbd"/>
  <rect x="459.5" y="15.5" width="8" height="17" rx="0.8" fill="#fafafa"/>
  <rect x="469.5" y="15.5" width="9" height="9.5" fill="#46e0e4"/>
  <rect x="469.5" y="25" width="9" height="4" fill="#2cc3cc"/>
  <rect x="469.5" y="29" width="9" height="3.5" fill="#16a3b4"/>
  <!-- folder -->
  <path d="M501 15.2q0-2 2-2h6.2q1.2 0 2 1l1.6 2.2H523q2 0 2 2V33q0 1.6-1.6 1.6h-20.8q-1.6 0-1.6-1.6z" fill="url(#fo)"/>
  <path d="M501 15.2q0-2 2-2h6.2q1.2 0 2 1l0.6 0.9q-0.6 2.2-2.6 2.2H501z" fill="#e0a21a"/>
  <path d="M505 34.6v-5q0-2 2-2h11q2 0 2 2v5z" fill="#1580d8"/>
  <rect x="508" y="30.2" width="9" height="1.6" rx="0.8" fill="#0d5fae"/>
  <!-- edge placeholder --><use href="#edge" transform="translate(545 11.800) scale(0.09375)"/>
  <!-- store -->
  <path d="M595.5 18v-2.6q0-2.6 2.6-2.6h5q2.6 0 2.6 2.6V18" fill="none" stroke="#1c1c1c" stroke-width="1.9"/>
  <path d="M589 17.5h23V34q0 1.8-1.8 1.8h-19.4q-1.8 0-1.8-1.8z" fill="#262626"/>
  <rect x="595.6" y="21.8" width="4.4" height="4.4" fill="#f25022"/><rect x="601" y="21.8" width="4.4" height="4.4" fill="#7fba00"/>
  <rect x="595.6" y="27.2" width="4.4" height="4.4" fill="#00a4ef"/><rect x="601" y="27.2" width="4.4" height="4.4" fill="#ffb900"/>
  <!-- gear --><g fill="url(#gear)"><circle cx="644.9" cy="23.9" r="9.9"/><rect x="641.3" y="11.7" width="7.2" height="7" rx="1.8" transform="rotate(90 644.9 23.9)"/><rect x="641.3" y="11.7" width="7.2" height="7" rx="1.8" transform="rotate(150 644.9 23.9)"/><rect x="641.3" y="11.7" width="7.2" height="7" rx="1.8" transform="rotate(210 644.9 23.9)"/><rect x="641.3" y="11.7" width="7.2" height="7" rx="1.8" transform="rotate(270 644.9 23.9)"/><rect x="641.3" y="11.7" width="7.2" height="7" rx="1.8" transform="rotate(330 644.9 23.9)"/><rect x="641.3" y="11.7" width="7.2" height="7" rx="1.8" transform="rotate(390 644.9 23.9)"/></g>
  <circle cx="644.9" cy="23.9" r="6.2" fill="#f7f7f7"/><circle cx="644.9" cy="23.9" r="4.1" fill="url(#gearc)"/>
  <rect x="642" y="40" width="6" height="2.8" rx="1.4" fill="#858585"/>
  <!-- active icon --><use href="#neticon" transform="translate(677 13.900)"/>
 </svg>
 <!-- tray -->
 <svg class="abs" style="left:836px;top:4px" width="110" height="32" viewBox="836 4 110 32">
  <path d="M840.6 26.6l5.6-5.8 5.6 5.8" fill="none" stroke="#1b1b1b" stroke-width="1.3" stroke-linecap="round" stroke-linejoin="round"/>
  <!-- network -->
  <g fill="none" stroke="#1b1b1b" stroke-width="1.2" stroke-linecap="round">
   <path d="M907.600 9.300H900q-1.600 0-1.600 1.600v7.800q0 1.600 1.600 1.600h9.800"/><path d="M903.500 20.300v3.100M908.800 20.300v3.100M901.300 23.400h8.500"/>
   <rect x="909.300" y="8.300" width="4.400" height="5.900" rx="1.400"/><path d="M909.600 9.900h3.800M911.500 14.200v9.500"/>
  </g>
  <!-- speaker -->
  <g fill="none" stroke-linejoin="round" stroke-linecap="round">
   <path d="M923.700 13.300h2.500l3.700-3.100v11.400l-3.700-3.100h-2.500z" stroke="#6a6a6a" stroke-width="1.100"/>
   <path d="M929.900 10.200v11.400" stroke="#1b1b1b" stroke-width="1.100"/>
   <path d="M932.200 13.100q1.700 2.800 0 5.600M934.800 10.900q3.200 5 0 10" stroke="#1b1b1b" stroke-width="1.100"/>
  </g>
 </svg>
 <div class="t" style="left:867px;top:6px;font-size:14px;line-height:20px">英</div>
 <div class="t" style="right:20px;top:1px;font-size:12px;line-height:17px;letter-spacing:-0.3px">9:12</div>
 <div class="t" style="right:20px;top:17px;font-size:12px;line-height:17px;letter-spacing:-0.3px">2021/7/16</div>
</div>

</body>
</html>
